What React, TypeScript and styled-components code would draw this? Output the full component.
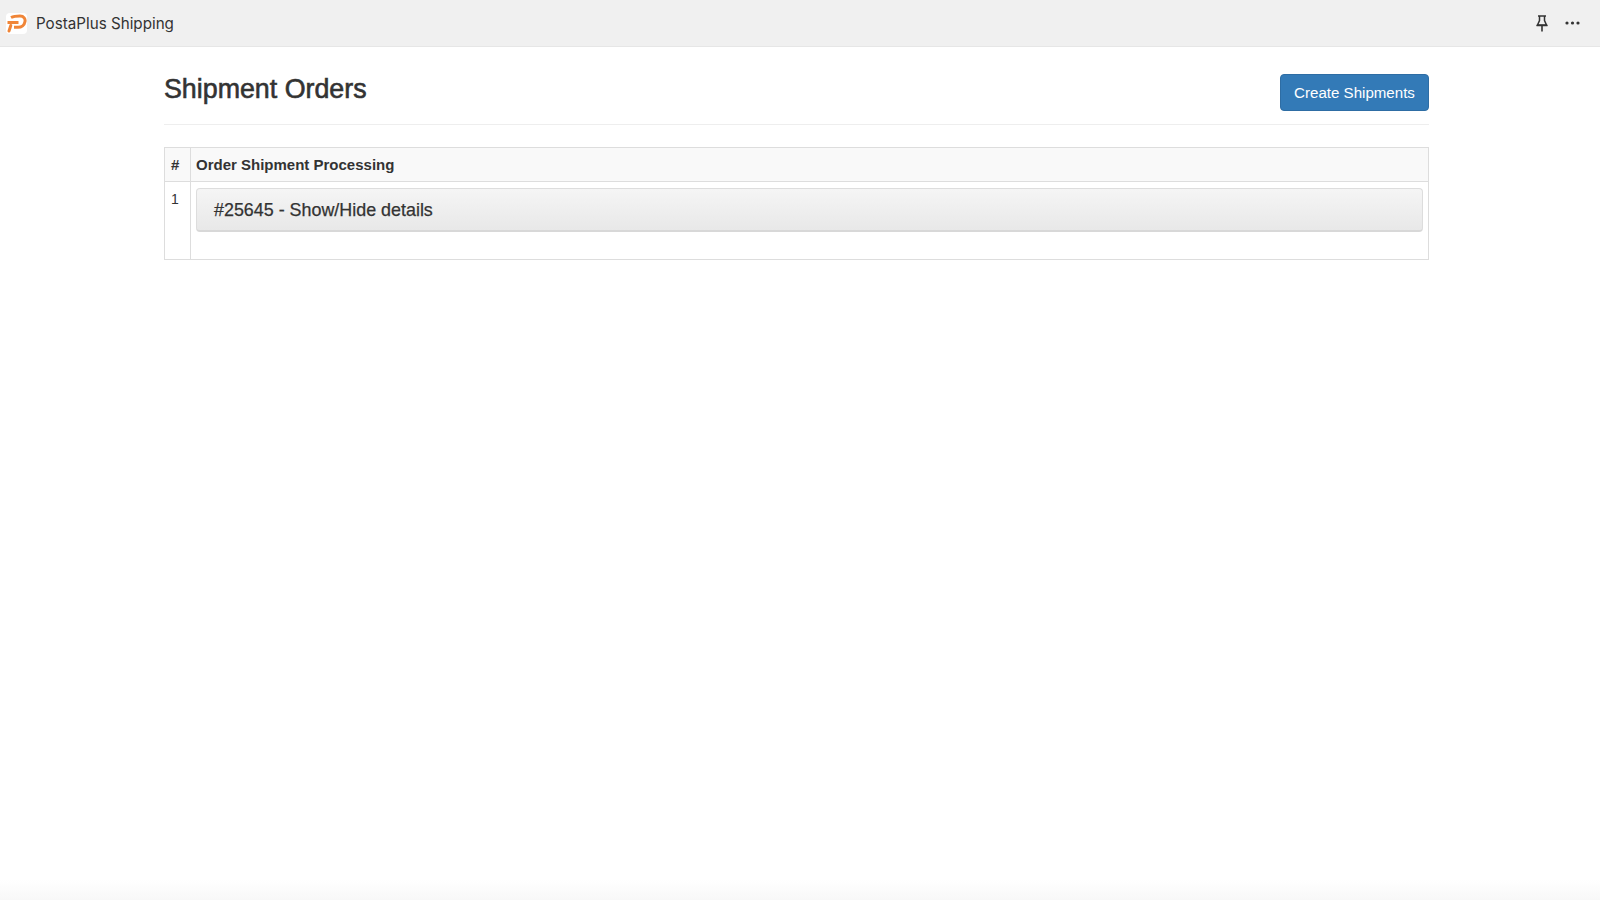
import React from "react";
import styled, { createGlobalStyle } from "styled-components";

const Global = createGlobalStyle`
  html, body { margin: 0; padding: 0; background: #fff; }
  body { font-family: "Liberation Sans", Arial, sans-serif; color: #333; }
`;

const Page = styled.div`
  height: 900px;
  display: flex;
  flex-direction: column;
  overflow: hidden;
  background: linear-gradient(to bottom, #fff 0, #fff 880px, #f8f8f8 900px);
`;

const TopBar = styled.header`
  height: 47px;
  box-sizing: border-box;
  flex: none;
  background: #f0f0f0;
  border-bottom: 1px solid #e6e6e6;
  display: flex;
  align-items: center;
  padding: 0 20px 0 6px;
`;

const AppName = styled.span`
  margin-left: 9px;
  font-family: Inter, "Liberation Sans", sans-serif;
  font-size: 15.2px;
  color: #333;
`;

const TopActions = styled.div`
  margin-left: auto;
  display: flex;
  align-items: center;
  gap: 17px;
`;

const Content = styled.main`
  width: 1265px;
  margin: 0 0 0 164px;
`;

const Header = styled.div`
  height: 78px;
  box-sizing: border-box;
  border-bottom: 1px solid #eee;
  display: flex;
  justify-content: space-between;
  align-items: flex-start;
  padding-top: 27px;
`;

const Title = styled.h1`
  margin: 0;
  font-size: 26.8px;
  line-height: 30px;
  font-weight: 400;
  color: #333;
  -webkit-text-stroke: 0.6px #333;
`;

const PrimaryButton = styled.button`
  width: 149px;
  height: 37px;
  border: 1px solid #2e6da4;
  border-radius: 4px;
  background: #337ab7;
  color: #fff;
  font-family: inherit;
  font-size: 15.1px;
  padding: 0;
`;

const Table = styled.table`
  width: 100%;
  margin-top: 22px;
  border-collapse: collapse;
  border: 1px solid #ddd;
  font-size: 14px;
`;

const HeadCell = styled.th`
  height: 34px;
  box-sizing: border-box;
  padding: 0 5px 1px;
  text-align: left;
  background: #f9f9f9;
  border: 1px solid #ddd;
  font-size: 15px;
  font-weight: 700;
  color: #333;
  &:first-child { width: 26px; padding-left: 6px; }
`;

const Cell = styled.td`
  height: 78px;
  box-sizing: border-box;
  padding: 6px 5px 26px;
  vertical-align: top;
  border: 1px solid #ddd;
  font-size: 14px;
  line-height: 22px;
  color: #333;
  &:first-child { padding-left: 6px; }
`;

const Accordion = styled.div`
  height: 44px;
  box-sizing: border-box;
  display: flex;
  align-items: center;
  padding-left: 17px;
  border: 1px solid #ddd;
  border-bottom: 2px solid #d8d8d8;
  border-radius: 4px;
  background: linear-gradient(to bottom, #f5f5f5, #e8e8e8);
  font-size: 17.9px;
  color: #333;
  -webkit-text-stroke: 0.25px #333;
`;

const Logo = () => (
  <svg width="21" height="21" viewBox="0 0 21 21" aria-hidden="true">
    <rect width="21" height="21" rx="4" fill="#fff" />
    <path
      d="M5 4.500C8 3 11 3 14 3C18 3 19.500 6 19 8.500C18.500 12 15.500 14.300 12 14.300H8"
      fill="none"
      stroke="#f08537"
      strokeWidth="3"
    />
    <path d="M1.500 9.500H12.500" fill="none" stroke="#f08537" strokeWidth="3" />
    <path d="M4.800 12.500L3 18" fill="none" stroke="#f08537" strokeWidth="3" strokeLinecap="round" />
  </svg>
);

const PinIcon = () => (
  <svg width="12" height="17" viewBox="0 0 12 17" aria-hidden="true" fill="none" stroke="#333" strokeWidth="1.5">
    <path d="M2 1h8M3.500 1v4.500L1.500 10h9L8.500 5.500V1" />
    <path d="M0.500 10.500h11" />
    <path d="M6 10v6.500" strokeWidth="1.600" />
  </svg>
);

const DotsIcon = () => (
  <svg width="15" height="4" viewBox="0 0 15 4" aria-hidden="true" fill="#333">
    <circle cx="2" cy="2" r="1.6" />
    <circle cx="7.500" cy="2" r="1.6" />
    <circle cx="13" cy="2" r="1.6" />
  </svg>
);

export default function App() {
  return (
    <Page>
      <Global />
      <TopBar>
        <Logo />
        <AppName>PostaPlus Shipping</AppName>
        <TopActions>
          <PinIcon />
          <DotsIcon />
        </TopActions>
      </TopBar>
      <Content>
        <Header>
          <Title>Shipment Orders</Title>
          <PrimaryButton>Create Shipments</PrimaryButton>
        </Header>
        <Table>
          <thead>
            <tr>
              <HeadCell>#</HeadCell>
              <HeadCell>Order Shipment Processing</HeadCell>
            </tr>
          </thead>
          <tbody>
            <tr>
              <Cell>1</Cell>
              <Cell>
                <Accordion>#25645 - Show/Hide details</Accordion>
              </Cell>
            </tr>
          </tbody>
        </Table>
      </Content>
    </Page>
  );
}
